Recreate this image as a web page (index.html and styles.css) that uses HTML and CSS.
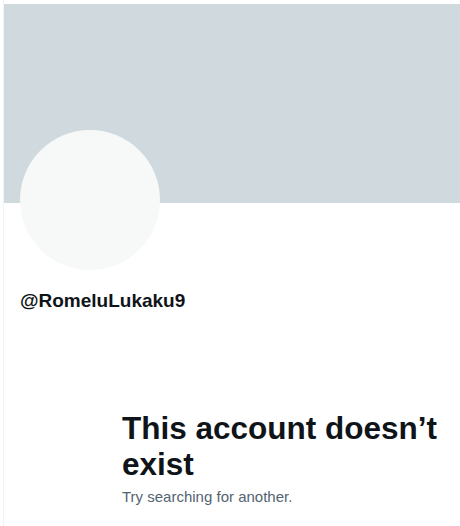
FILE: index.html
```html
<!DOCTYPE html>
<html lang="en">
<head>
  <meta charset="UTF-8" />
  <meta name="viewport" content="width=device-width, initial-scale=1.0" />
  <title>@RomeluLukaku9</title>
  <link rel="stylesheet" href="styles.css">
</head>
<body>
  <div class="profile">
    <!-- Empty header banner -->
    <div class="banner"></div>
    <!-- Placeholder avatar and handle -->
    <div class="profile-info">
      <div class="avatar"></div>
      <div class="handle">@RomeluLukaku9</div>
    </div>
    <!-- Missing account notice -->
    <div class="empty-state">
      <h1 class="empty-title">This account doesn’t exist</h1>
      <p class="empty-text">Try searching for another.</p>
    </div>
  </div>
</body>
</html>
```

FILE: styles.css
```css
/* Base */
* { margin: 0; padding: 0; box-sizing: border-box; }
body {
  font-family: 'Liberation Sans', Arial, sans-serif;
  background: #fff;
  color: #0f1419;
  overflow: hidden;
}
.profile {
  margin-left: 3px;
  padding-top: 4px;
  min-height: 526px;
  border-left: 1px solid #eff3f4;
}
/* Banner */
.banner {
  height: 199px;
  background: #cfd9de;
}
/* Avatar + handle */
.profile-info {
  padding-left: 16px;
}
.avatar {
  width: 140px;
  height: 140px;
  margin-top: -73px;
  border-radius: 50%;
  background: #f7f9f9;
  position: relative;
}
.handle {
  margin-top: 19px;
  font-size: 19px;
  line-height: 24px;
  font-weight: bold;
}
/* Empty state */
.empty-state {
  padding-left: 118px;
  margin-top: 97px;
}
.empty-title {
  font-size: 31.5px;
  line-height: 36px;
  font-weight: bold;
  width: 330px;
}
.empty-text {
  margin-top: 5px;
  font-size: 15px;
  line-height: 20px;
  color: #536471;
}
```
